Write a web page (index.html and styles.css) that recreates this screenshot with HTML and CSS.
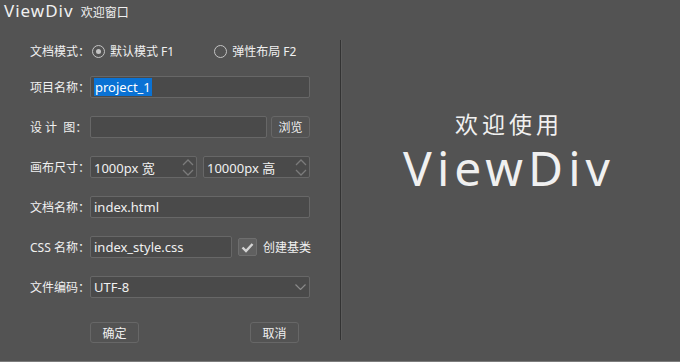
FILE: index.html
```html
<!DOCTYPE html>
<html lang="zh-CN">
<head>
    <meta charset="UTF-8">
    <meta name="viewport" content="width=device-width, initial-scale=1.0">
    <title>欢迎窗口</title>
    <link rel="stylesheet" href="styles.css">
</head>
<body>
    <div class="window">
        <header class="titlebar">
            <span class="app-name">ViewDiv</span>
            <span class="window-title">欢迎窗口</span>
        </header>

        <div class="content">
            <form class="form">
                <div class="row row-mode">
                    <label class="label">文档模式：</label>
                    <span class="radio checked"></span>
                    <span class="radio-text">默认模式 F1</span>
                    <span class="radio radio-second"></span>
                    <span class="radio-text">弹性布局 F2</span>
                </div>

                <div class="row">
                    <label class="label">项目名称：</label>
                    <div class="field full"><span class="selected">project_1</span></div>
                </div>

                <div class="row">
                    <label class="label">设 计&nbsp;&nbsp;图：</label>
                    <div class="field design"></div>
                    <button type="button" class="button browse">浏览</button>
                </div>

                <div class="row">
                    <label class="label">画布尺寸：</label>
                    <div class="field size">
                        <span>1000px 宽</span>
                        <svg class="spin" width="12" height="19" viewBox="0 0 12 19">
                            <path d="M1 7 L6 2 L11 7 M1 12 L6 17 L11 12" fill="none" stroke="#7b7b7b" stroke-width="1.3"/>
                        </svg>
                    </div>
                    <div class="field size size-second">
                        <span>10000px 高</span>
                        <svg class="spin" width="12" height="19" viewBox="0 0 12 19">
                            <path d="M1 7 L6 2 L11 7 M1 12 L6 17 L11 12" fill="none" stroke="#7b7b7b" stroke-width="1.3"/>
                        </svg>
                    </div>
                </div>

                <div class="row">
                    <label class="label">文档名称：</label>
                    <div class="field full">index.html</div>
                </div>

                <div class="row">
                    <label class="label">CSS 名称：</label>
                    <div class="field css">index_style.css</div>
                    <span class="checkbox">
                        <svg width="13" height="11" viewBox="0 0 13 11">
                            <path d="M1.5 5.5 L5 9 L11.5 2" fill="none" stroke="#d4d4d4" stroke-width="2.4"/>
                        </svg>
                    </span>
                    <span class="check-text">创建基类</span>
                </div>

                <div class="row">
                    <label class="label">文件编码：</label>
                    <div class="field full select">
                        <span>UTF-8</span>
                        <svg width="11" height="6" viewBox="0 0 11 6">
                            <path d="M0.5 0.5 L5.5 5.5 L10.5 0.5" fill="none" stroke="#8a8a8a" stroke-width="1.2"/>
                        </svg>
                    </div>
                </div>

                <div class="actions">
                    <button type="button" class="button action">确定</button>
                    <button type="button" class="button action">取消</button>
                </div>
            </form>

            <div class="divider"></div>

            <div class="welcome">
                <p class="welcome-text">欢迎使用</p>
                <p class="welcome-name">ViewDiv</p>
            </div>
        </div>
    </div>
</body>
</html>
```

FILE: styles.css
```css
/* 重置默认样式 */
* {
    margin: 0;
    padding: 0;
    box-sizing: border-box;
    font-family: "Noto Sans", "Noto Sans CJK SC", sans-serif;
}

body {
    background-color: #535353;
    color: #f0f0f0;
}

/* 窗口 */
.window {
    width: 680px;
    height: 362px;
    border-bottom: 1px solid #7c7c7c;
    overflow: hidden;
}

/* 标题栏 */
.titlebar {
    height: 24px;
    padding-left: 4px;
    display: flex;
    align-items: baseline;
    line-height: 22px;
}

.app-name {
    font-size: 17px;
    letter-spacing: 1px;
}

.window-title {
    font-size: 12px;
    margin-left: 7px;
}

.content {
    display: flex;
    height: 337px;
}

/* 左侧表单 */
.form {
    width: 340px;
    padding: 16px 0 0 30px;
}

.row {
    display: flex;
    align-items: center;
    height: 22px;
    margin-top: 18px;
    font-size: 12px;
}

.row-mode {
    margin-top: 0;
}

.row-mode + .row {
    margin-top: 14px;
}

.label {
    width: 60px;
    flex-shrink: 0;
    white-space: pre;
}

.radio {
    width: 13px;
    height: 13px;
    border: 1.5px solid #c4c4c4;
    border-radius: 50%;
    margin-left: 2px;
    display: flex;
    align-items: center;
    justify-content: center;
}

.radio.checked::after {
    content: "";
    width: 5px;
    height: 5px;
    border-radius: 50%;
    background: #c4c4c4;
}

.radio-second {
    margin-left: 40px;
}

.radio-text {
    margin-left: 5px;
}

.field {
    height: 22px;
    background: #4a4a4a;
    border: 1px solid #676767;
    border-radius: 2px;
    font-size: 13px;
    padding: 0 3px;
    display: flex;
    align-items: center;
    justify-content: space-between;
}

.full {
    width: 220px;
}

.design {
    width: 177px;
}

.size {
    width: 107px;
    padding-right: 2px;
}

.size-second {
    margin-left: 6px;
}

.css {
    width: 142px;
}

.select {
    padding-right: 3px;
}

.selected {
    background: #0a72d4;
    color: #ffffff;
    padding: 0 1px;
    line-height: 18px;
}

.button {
    height: 22px;
    background: #535353;
    border: 1px solid #676767;
    border-radius: 3px;
    color: #f0f0f0;
    font-size: 12px;
}

.browse {
    width: 39px;
    margin-left: 4px;
}

.checkbox {
    width: 19px;
    height: 18px;
    margin-left: 6px;
    background: #606060;
    border: 1px solid #6e6e6e;
    border-radius: 2px;
    display: flex;
    align-items: center;
    justify-content: center;
}

.check-text {
    margin-left: 6px;
}

.actions {
    display: flex;
    gap: 111px;
    margin: 24px 0 0 60px;
}

.action {
    width: 49px;
    height: 21px;
}

/* 分隔线 */
.divider {
    width: 1px;
    height: 300px;
    margin-top: 16px;
    background: #333333;
    border-right: 1px solid #5c5c5c;
    box-sizing: content-box;
}

/* 右侧欢迎 */
.welcome {
    flex: 1;
    text-align: center;
    padding: 86px 4px 0 0;
}

.welcome-text {
    font-size: 23px;
    letter-spacing: 4px;
    line-height: 28px;
}

.welcome-name {
    font-size: 48px;
    letter-spacing: 5px;
    line-height: 52px;
    margin-top: 4px;
}
```
